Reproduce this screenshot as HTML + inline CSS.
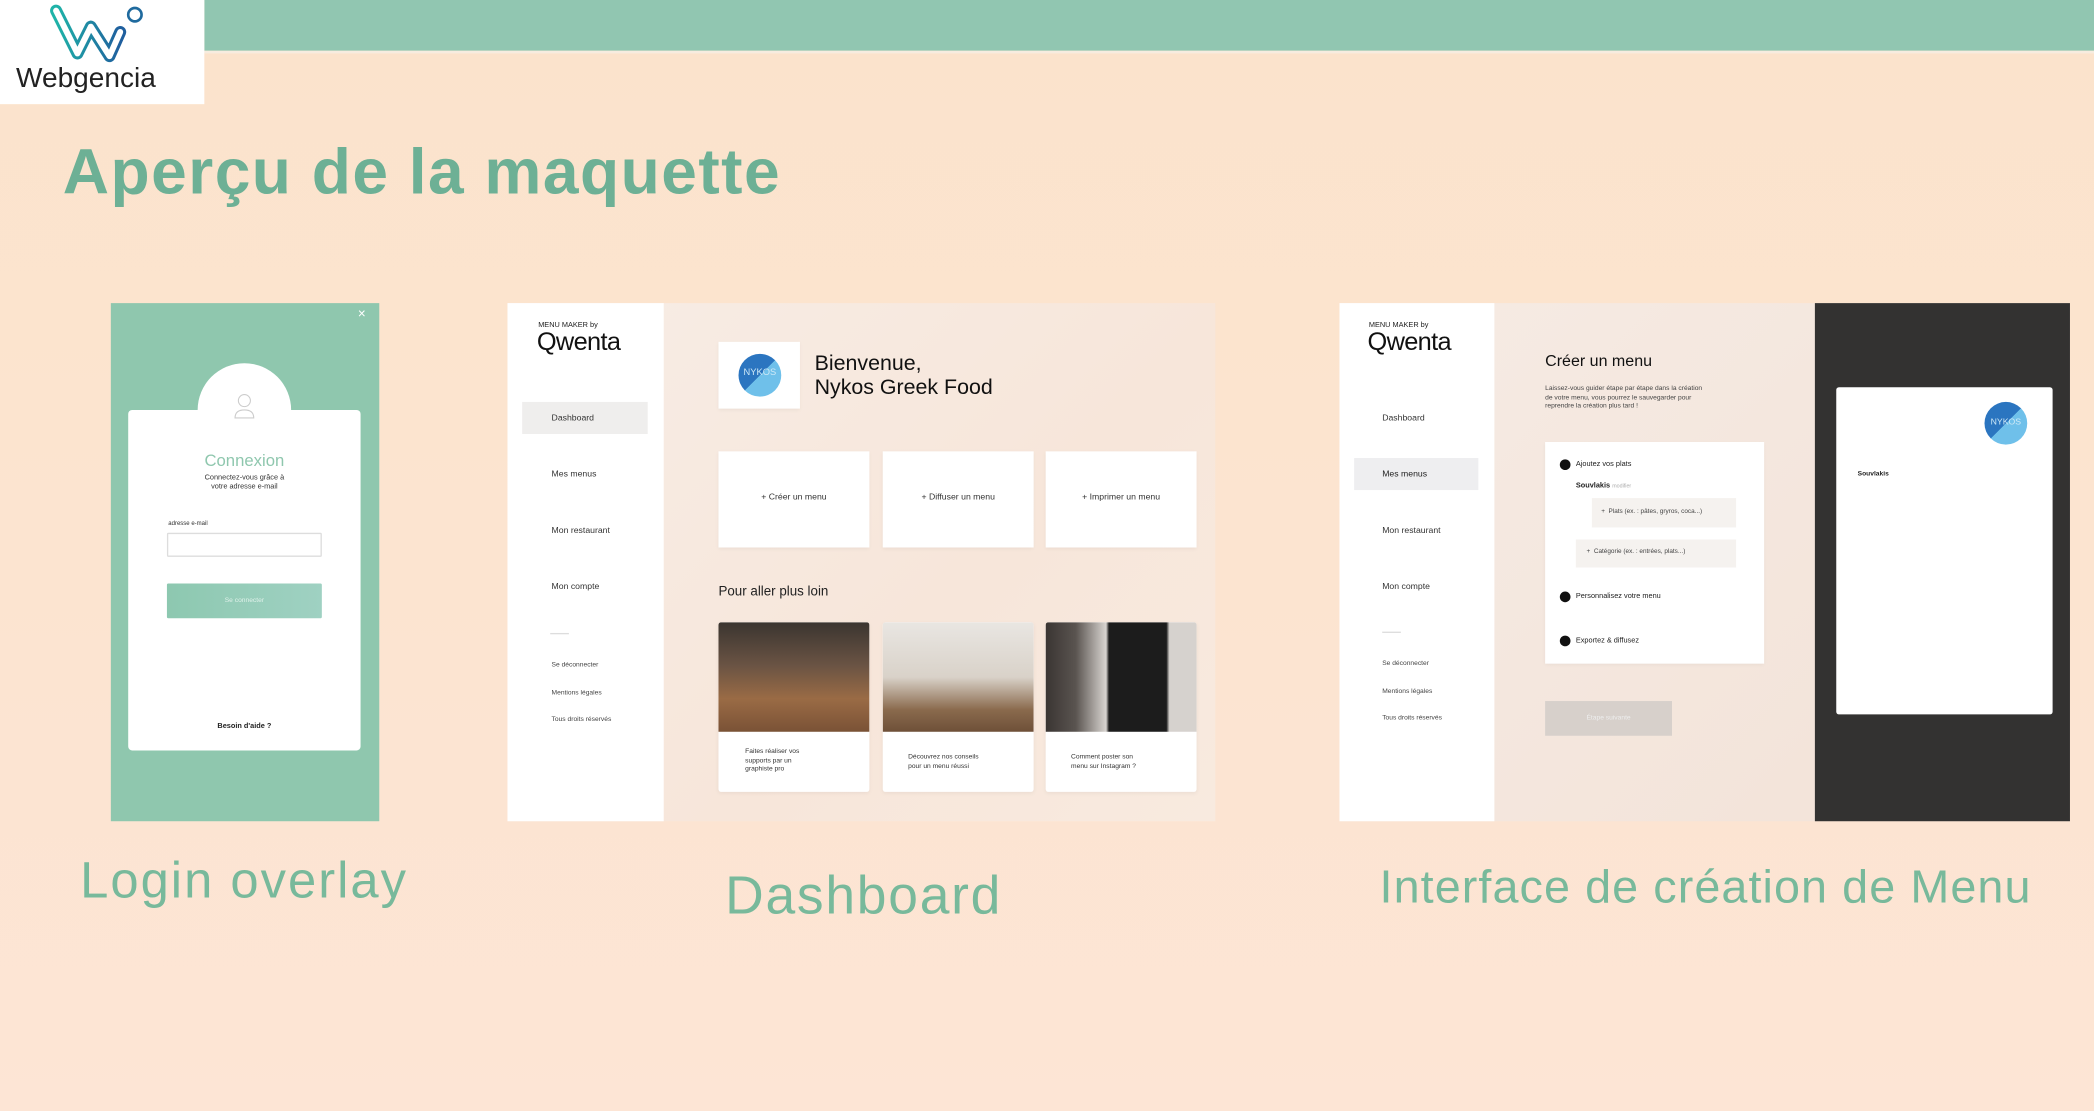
<!DOCTYPE html>
<html><head><meta charset="utf-8"><style>
*{margin:0;padding:0;box-sizing:border-box}
html,body{width:2094px;height:1111px;overflow:hidden}
body{background:#fce3cf;font-family:"Liberation Sans",sans-serif}
#s{position:absolute;left:0;top:0;width:1568px;height:832px;transform:scale(1.33546,1.33534);transform-origin:0 0;background:linear-gradient(180deg,#fbe3cc 0%,#fce4d0 50%,#fde5d5 100%)}
.a{position:absolute}
.t{position:absolute;white-space:nowrap;color:#222}
.side{background:#fff}
.nav{font-size:6.5px;color:#333}
.sm{font-size:5px;color:#444}
.card{background:#fff;box-shadow:0 1px 3px rgba(0,0,0,.05)}
</style></head><body><div id="s">
<!-- top bar -->
<div class="a" style="left:153px;top:0;width:1415px;height:38px;background:#91c6b1"></div>
<div class="a" style="left:153px;top:38px;width:1415px;height:2px;background:#f7ecdf"></div>
<div class="a" style="left:0;top:0;width:153px;height:78px;background:#fff"></div>
<svg class="a" style="left:30px;top:0px" width="85" height="48" viewBox="0 0 85 48">
<defs><linearGradient id="g" x1="0" x2="1"><stop offset="0" stop-color="#1fb3a8"/><stop offset="1" stop-color="#1f5f9e"/></linearGradient></defs>
<path d="M12 8 L28 40 M28 40 L38 20 M38 20 L52 42 M52 42 L60 24" fill="none" stroke="url(#g)" stroke-width="9" stroke-linecap="round"/>
<path d="M12 8 L28 40 M28 40 L38 20 M38 20 L52 42 M52 42 L60 24" fill="none" stroke="#fff" stroke-width="4.5" stroke-linecap="round"/>
<circle cx="71" cy="11" r="5" fill="none" stroke="#1f6a9e" stroke-width="2"/>
</svg>
<div class="t" style="left:12px;top:47px;font-size:21px;color:#222">Webgencia</div>
<!-- title -->
<div class="t" style="left:47px;top:102px;font-size:48px;font-weight:bold;color:#6db095;letter-spacing:1.1px">Aperçu de la maquette</div>

<!-- LOGIN -->
<div class="a" style="left:83px;top:227px;width:201px;height:388px;background:#8fc7ae"></div>
<div class="t" style="left:268px;top:230px;font-size:10px;color:#fff">×</div>
<div class="a" style="left:148px;top:272px;width:70px;height:70px;border-radius:50%;background:#fff"></div>
<div class="a" style="left:96px;top:307px;width:174px;height:255px;background:#fff;border-radius:3px"></div>
<svg class="a" style="left:174px;top:293px" width="18" height="22" viewBox="0 0 18 22"><circle cx="9" cy="7" r="4.5" fill="none" stroke="#ccc" stroke-width=".8"/><path d="M2 20 Q2 14 9 14 Q16 14 16 20 Z" fill="none" stroke="#ccc" stroke-width=".8"/></svg>
<div class="t" style="left:96px;width:174px;text-align:center;top:338px;font-size:12.5px;color:#8fc7ae">Connexion</div>
<div class="t" style="left:96px;width:174px;text-align:center;top:355px;font-size:5.5px;line-height:7px;color:#333">Connectez-vous grâce à<br>votre adresse e-mail</div>
<div class="t" style="left:126px;top:389px;font-size:4.5px;color:#333">adresse e-mail</div>
<div class="a" style="left:125px;top:399px;width:116px;height:18px;border:1px solid #ddd;border-radius:1px"></div>
<div class="a" style="left:125px;top:437px;width:116px;height:26px;background:linear-gradient(90deg,#8dc8b0,#9fd1c2);border-radius:1px"></div>
<div class="t" style="left:125px;width:116px;text-align:center;top:447px;font-size:5px;color:#dff1ea">Se connecter</div>
<div class="t" style="left:96px;width:174px;text-align:center;top:541px;font-size:5.5px;font-weight:bold;color:#222">Besoin d'aide ?</div>

<!-- DASHBOARD -->
<div class="a" style="left:380px;top:227px;width:530px;height:388px;background:linear-gradient(135deg,#f7ede6,#f7e6da 60%,#f8eadf)"></div>
<div class="a side" style="left:380px;top:227px;width:117px;height:388px"></div>
<div class="t" style="left:403px;top:241px;font-size:5.5px;color:#222">MENU MAKER by</div>
<div class="t" style="left:402px;top:246px;font-size:19px;color:#111;letter-spacing:-0.5px">Qwenta</div>
<div class="a" style="left:391px;top:301px;width:94px;height:24px;background:#efeeed"></div>
<div class="t nav" style="left:413px;top:310px">Dashboard</div>
<div class="t nav" style="left:413px;top:352px">Mes menus</div>
<div class="t nav" style="left:413px;top:394px">Mon restaurant</div>
<div class="t nav" style="left:413px;top:436px">Mon compte</div>
<div class="a" style="left:412px;top:474px;width:14px;height:1px;background:#ddd"></div>
<div class="t sm" style="left:413px;top:495px">Se déconnecter</div>
<div class="t sm" style="left:413px;top:516px">Mentions légales</div>
<div class="t sm" style="left:413px;top:536px">Tous droits réservés</div>
<div class="a card" style="left:538px;top:256px;width:61px;height:50px"></div>
<div class="a" style="left:553px;top:265px;width:32px;height:32px;border-radius:50%;background:linear-gradient(135deg,#2b75c0 50%,#6fc0ea 50%)"></div>
<div class="t" style="left:553px;top:276px;width:32px;text-align:center;font-size:7px;color:#cfe9f7">NYKOS</div>
<div class="t" style="left:610px;top:264px;font-size:16px;line-height:17.5px;color:#111">Bienvenue,<br>Nykos Greek Food</div>
<div class="a card" style="left:538px;top:338px;width:113px;height:72px"></div>
<div class="a card" style="left:661px;top:338px;width:113px;height:72px"></div>
<div class="a card" style="left:783px;top:338px;width:113px;height:72px"></div>
<div class="t nav" style="left:538px;width:113px;text-align:center;top:369px">+ Créer un menu</div>
<div class="t nav" style="left:661px;width:113px;text-align:center;top:369px">+ Diffuser un menu</div>
<div class="t nav" style="left:783px;width:113px;text-align:center;top:369px">+ Imprimer un menu</div>
<div class="t" style="left:538px;top:438px;font-size:10px;color:#222">Pour aller plus loin</div>
<div class="a card" style="left:538px;top:466px;width:113px;height:127px;border-radius:2px;overflow:hidden"><div style="height:82px;background:linear-gradient(180deg,#3b3530 0%,#6b5444 40%,#9a6b45 70%,#7a5236 100%)"></div></div>
<div class="a card" style="left:661px;top:466px;width:113px;height:127px;border-radius:2px;overflow:hidden"><div style="height:82px;background:linear-gradient(180deg,#e9e6e2 0%,#d9d2c9 50%,#8a6a4d 80%,#6e5038 100%)"></div></div>
<div class="a card" style="left:783px;top:466px;width:113px;height:127px;border-radius:2px;overflow:hidden"><div style="height:82px;background:linear-gradient(90deg,#3a3532 0%,#5a5450 20%,#d8d4d0 40%,#1c1c1c 42%,#1c1c1c 80%,#d6d2ce 82%)"></div></div>
<div class="t sm" style="left:558px;top:560px;line-height:6.5px;color:#333">Faites réaliser vos<br>supports par un<br>graphiste pro</div>
<div class="t sm" style="left:680px;top:564px;line-height:6.5px;color:#333">Découvrez nos conseils<br>pour un menu réussi</div>
<div class="t sm" style="left:802px;top:564px;line-height:6.5px;color:#333">Comment poster son<br>menu sur Instagram ?</div>

<!-- CREATE -->
<div class="a" style="left:1003px;top:227px;width:547px;height:388px;background:linear-gradient(135deg,#f6ebe4,#f2e2d7)"></div>
<div class="a side" style="left:1003px;top:227px;width:116px;height:388px"></div>
<div class="t" style="left:1025px;top:241px;font-size:5.5px;color:#222">MENU MAKER by</div>
<div class="t" style="left:1024px;top:246px;font-size:19px;color:#111;letter-spacing:-0.5px">Qwenta</div>
<div class="a" style="left:1014px;top:343px;width:93px;height:24px;background:#eeeef0"></div>
<div class="t nav" style="left:1035px;top:310px">Dashboard</div>
<div class="t nav" style="left:1035px;top:352px;color:#222">Mes menus</div>
<div class="t nav" style="left:1035px;top:394px">Mon restaurant</div>
<div class="t nav" style="left:1035px;top:436px">Mon compte</div>
<div class="a" style="left:1035px;top:473px;width:14px;height:1px;background:#ddd"></div>
<div class="t sm" style="left:1035px;top:494px">Se déconnecter</div>
<div class="t sm" style="left:1035px;top:515px">Mentions légales</div>
<div class="t sm" style="left:1035px;top:535px">Tous droits réservés</div>
<div class="t" style="left:1157px;top:263px;font-size:12px;color:#111">Créer un menu</div>
<div class="t" style="left:1157px;top:288px;font-size:5px;line-height:6.5px;color:#444">Laissez-vous guider étape par étape dans la création<br>de votre menu, vous pourrez le sauvegarder pour<br>reprendre la création plus tard !</div>
<div class="a card" style="left:1157px;top:331px;width:164px;height:166px"></div>
<div class="a" style="left:1168px;top:344px;width:8px;height:8px;border-radius:50%;background:#111"></div>
<div class="t" style="left:1180px;top:345px;font-size:5.5px;color:#222">Ajoutez vos plats</div>
<div class="t" style="left:1180px;top:361px;font-size:5.5px;font-weight:bold;color:#222">Souvlakis <span style="font-weight:normal;font-size:4px;color:#aaa">modifier</span></div>
<div class="a" style="left:1192px;top:373px;width:108px;height:22px;background:#f5f2ef"></div>
<div class="t" style="left:1199px;top:381px;font-size:4.8px;color:#444">+ &nbsp;Plats (ex. : pâtes, gryros, coca...)</div>
<div class="a" style="left:1180px;top:404px;width:120px;height:21px;background:#f5f2ef"></div>
<div class="t" style="left:1188px;top:411px;font-size:4.8px;color:#444">+ &nbsp;Catégorie (ex. : entrées, plats...)</div>
<div class="a" style="left:1168px;top:443px;width:8px;height:8px;border-radius:50%;background:#111"></div>
<div class="t" style="left:1180px;top:444px;font-size:5.5px;color:#222">Personnalisez votre menu</div>
<div class="a" style="left:1168px;top:476px;width:8px;height:8px;border-radius:50%;background:#111"></div>
<div class="t" style="left:1180px;top:477px;font-size:5.5px;color:#222">Exportez &amp; diffusez</div>
<div class="a" style="left:1157px;top:525px;width:95px;height:26px;background:#d7d0cb"></div>
<div class="t" style="left:1157px;width:95px;text-align:center;top:535px;font-size:5px;color:#eee">Étape suivante</div>
<div class="a" style="left:1359px;top:227px;width:191px;height:388px;background:#333231"></div>
<div class="a" style="left:1375px;top:290px;width:162px;height:245px;background:#fff;border-radius:2px"></div>
<div class="a" style="left:1486px;top:301px;width:32px;height:32px;border-radius:50%;background:linear-gradient(135deg,#2b75c0 50%,#6fc0ea 50%)"></div>
<div class="t" style="left:1486px;top:313px;width:32px;text-align:center;font-size:6.5px;color:#cfe9f7">NYKOS</div>
<div class="t" style="left:1391px;top:352px;font-size:5px;font-weight:bold;color:#222">Souvlakis</div>

<!-- labels -->
<div class="t" style="left:60px;top:639px;font-size:38px;color:#78b99b;letter-spacing:1.5px">Login overlay</div>
<div class="t" style="left:543px;top:649px;font-size:40px;color:#78b99b;letter-spacing:1.3px">Dashboard</div>
<div class="t" style="left:1033px;top:645px;font-size:35px;color:#78b99b;letter-spacing:0.8px">Interface de création de Menu</div>
</div></body></html>
